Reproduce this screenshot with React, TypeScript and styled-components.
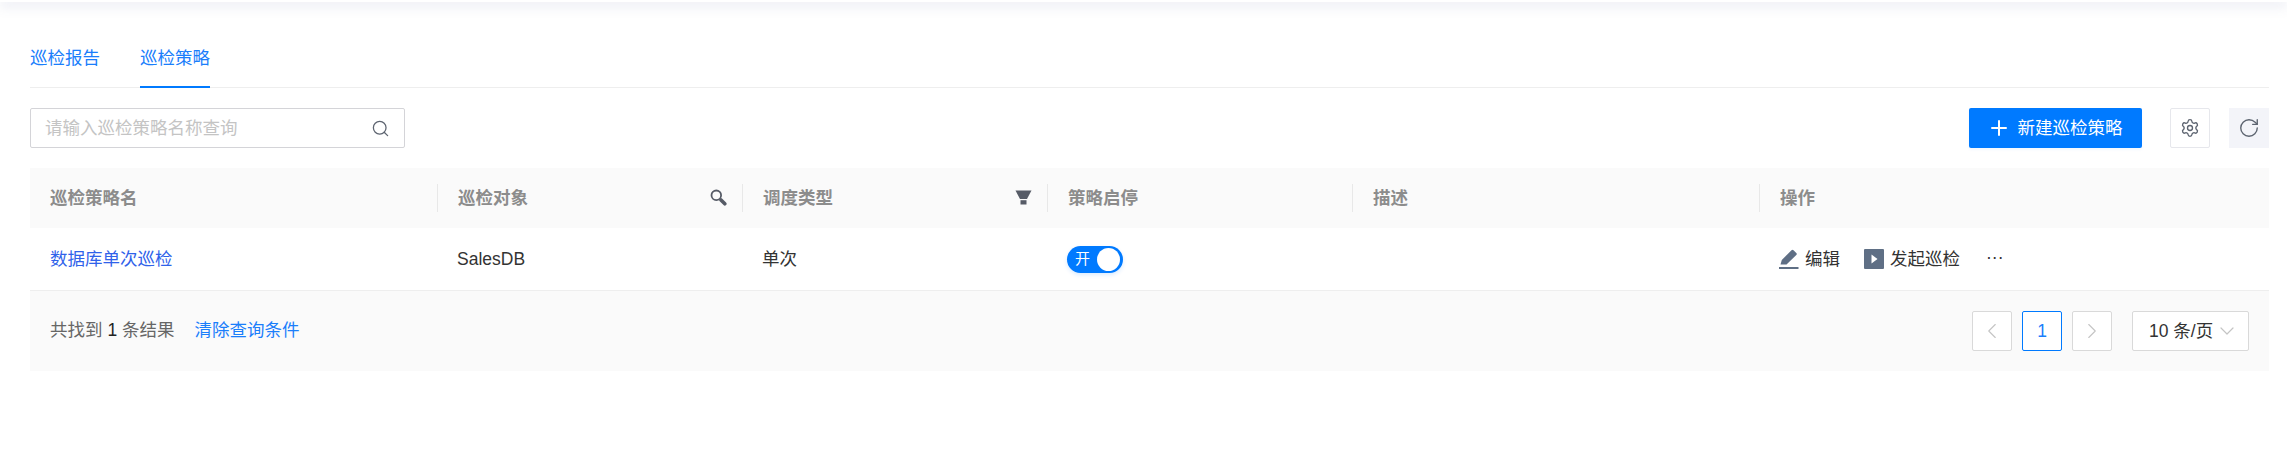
import React from 'react'
import styled, { createGlobalStyle } from 'styled-components'
import { Plus, Search, Settings, RotateCw, ChevronLeft, ChevronRight, ChevronDown } from 'lucide-react'

const GlobalStyle = createGlobalStyle`
  html, body {
    margin: 0;
    padding: 0;
    background: #fff;
    overflow: hidden;
  }
  * {
    box-sizing: border-box;
  }
  body {
    font-family: "Liberation Sans", "Noto Sans CJK SC", sans-serif;
    font-size: 17.5px;
    line-height: 24px;
    color: #333;
  }
`

const TopShadow = styled.div`
  height: 2px;
  background: #fff;
  box-shadow: 0 2px 12px rgba(100, 110, 165, 0.5);
`

const Page = styled.div`
  padding: 0 18px 0 30px;
`

const Tabs = styled.div`
  display: flex;
  gap: 40px;
  height: 86px;
  border-bottom: 1px solid #eeeeee;
`

const Tab = styled.div<{ $active?: boolean }>`
  height: 86px;
  padding-top: 44px;
  line-height: 24px;
  color: #1a7efb;
  border-bottom: ${({ $active }) => ($active ? '2px solid #007aff' : 'none')};
`

const Toolbar = styled.div`
  display: flex;
  align-items: center;
  height: 40px;
  margin-top: 20px;
`

const SearchBox = styled.div`
  width: 375px;
  height: 40px;
  display: flex;
  align-items: center;
  justify-content: space-between;
  padding: 0 14px;
  border: 1px solid #d4d4d8;
  border-radius: 2px;
  color: #c4c4c4;
  svg {
    color: #5d6470;
  }
`

const PrimaryButton = styled.div`
  margin-left: auto;
  width: 173px;
  height: 40px;
  padding-right: 2px;
  display: flex;
  align-items: center;
  justify-content: center;
  gap: 7px;
  background: #007aff;
  color: #fff;
  border-radius: 2px;
  box-shadow: 0 2px 3px rgba(0, 122, 255, 0.05);
`

const IconButton = styled.div<{ $filled?: boolean }>`
  width: 40px;
  height: 40px;
  display: flex;
  align-items: center;
  justify-content: center;
  color: #5d6470;
  border-radius: ${({ $filled }) => ($filled ? '0' : '2px')};
  background: ${({ $filled }) => ($filled ? '#f3f4f9' : '#fff')};
  border: ${({ $filled }) => ($filled ? 'none' : '1px solid #e6e7ec')};
  margin-left: ${({ $filled }) => ($filled ? '19px' : '28px')};
`

const Table = styled.div`
  margin-top: 20px;
`

const columns = '407px 305px 305px 305px 407px 1fr'

const HeaderRow = styled.div`
  display: grid;
  grid-template-columns: ${columns};
  height: 60px;
  align-items: center;
  background: #fafafa;
`

const HeaderCell = styled.div<{ $divider?: boolean }>`
  height: 28px;
  display: flex;
  align-items: center;
  justify-content: space-between;
  padding: 0 30px 1px 20px;
  font-weight: 700;
  color: #8c8c8c;
  border-left: ${({ $divider }) => ($divider ? '1px solid #e8e8e8' : 'none')};
  svg {
    flex: none;
    margin-right: -15px;
    color: #565b66;
  }
`

const BodyRow = styled.div`
  display: grid;
  grid-template-columns: ${columns};
  height: 63px;
  align-items: center;
  border-bottom: 1px solid #eeeeee;
`

const BodyCell = styled.div`
  padding-left: 20px;
  color: #333;
`

const NameLink = styled.span`
  color: #2f62ea;
`

const Toggle = styled.div`
  position: relative;
  width: 56px;
  height: 27px;
  border-radius: 14px;
  background: #007aff;
  color: #fff;
  font-size: 15px;
  line-height: 26px;
  padding-left: 8px;
  box-shadow: 0 2px 4px rgba(0, 122, 255, 0.15);
`

const Knob = styled.span`
  position: absolute;
  top: 2px;
  right: 3px;
  width: 23px;
  height: 23px;
  border-radius: 50%;
  background: #fff;
`

const Actions = styled.div`
  display: flex;
  align-items: center;
  padding-left: 20px;
`

const Action = styled.div`
  display: flex;
  align-items: center;
  gap: 6px;
  margin-right: 24px;
  color: #333;
`

const More = styled.span`
  margin-left: 2px;
  color: #333;
  position: relative;
  top: -2px;
`

const Footer = styled.div`
  height: 80px;
  display: flex;
  align-items: center;
  justify-content: space-between;
  padding: 0 20px;
  background: #fafafa;
`

const Summary = styled.div`
  display: flex;
  gap: 20px;
  padding-bottom: 2px;
  color: #666;
`

const Count = styled.b`
  font-weight: 400;
  color: #222;
`

const ClearLink = styled.span`
  color: #1a7efb;
`

const Pager = styled.div`
  display: flex;
  align-items: center;
  gap: 10px;
`

const PageButton = styled.div<{ $active?: boolean }>`
  width: 40px;
  height: 40px;
  display: flex;
  align-items: center;
  justify-content: center;
  background: #fff;
  border-radius: 2px;
  border: 1px solid ${({ $active }) => ($active ? '#007aff' : '#d9d9d9')};
  color: ${({ $active }) => ($active ? '#1a7efb' : '#c4c4c4')};
`

const SizeSelect = styled.div`
  width: 117px;
  height: 40px;
  margin-left: 10px;
  display: flex;
  align-items: center;
  justify-content: space-between;
  padding: 0 9px 0 16px;
  background: #fff;
  border: 1px solid #d9d9d9;
  border-radius: 2px;
  color: #333;
  svg {
    color: #c4c4c4;
  }
`

const KeyIcon = () => (
  <svg width="17" height="17" viewBox="0 0 17 17" fill="none">
    <circle cx="6.3" cy="6.3" r="4.8" stroke="currentColor" strokeWidth="1.8" />
    <path d="M11 11L14.8 14.8" stroke="currentColor" strokeWidth="3.6" strokeLinecap="round" />
  </svg>
)

const FunnelIcon = () => (
  <svg width="17" height="15" viewBox="0 0 17 15" fill="currentColor">
    <path d="M0.5 0.5H16.5L12 9H5Z" />
    <rect x="5.5" y="10.2" width="6" height="4.3" />
  </svg>
)

const PenIcon = () => (
  <svg width="20" height="20" viewBox="0 0 20 20" fill="#5f6f85">
    <path d="M1.5 15.5L2.8 11L12.5 1.2Q13.5 0.2 14.5 1.2L17.3 4Q18.3 5 17.3 6L7.5 15.5Z" />
    <rect y="18" width="19.5" height="2" />
  </svg>
)

const PlayIcon = () => (
  <svg width="20" height="20" viewBox="0 0 20 20">
    <rect width="20" height="20" rx="1" fill="#5f6f85" />
    <path d="M7.5 5.5L13.5 10L7.5 14.5Z" fill="#fff" />
  </svg>
)

export default function App() {
  return (
    <>
      <GlobalStyle />
      <TopShadow />
      <Page>
        <Tabs>
          <Tab>巡检报告</Tab>
          <Tab $active>巡检策略</Tab>
        </Tabs>
        <Toolbar>
          <SearchBox>
            请输入巡检策略名称查询
            <Search size={19} strokeWidth={1.6} />
          </SearchBox>
          <PrimaryButton>
            <Plus size={24} strokeWidth={2} />
            新建巡检策略
          </PrimaryButton>
          <IconButton>
            <Settings size={20} strokeWidth={1.6} />
          </IconButton>
          <IconButton $filled>
            <RotateCw size={22} strokeWidth={1.5} />
          </IconButton>
        </Toolbar>
        <Table>
          <HeaderRow>
            <HeaderCell>巡检策略名</HeaderCell>
            <HeaderCell $divider>
              巡检对象
              <KeyIcon />
            </HeaderCell>
            <HeaderCell $divider>
              调度类型
              <FunnelIcon />
            </HeaderCell>
            <HeaderCell $divider>策略启停</HeaderCell>
            <HeaderCell $divider>描述</HeaderCell>
            <HeaderCell $divider>操作</HeaderCell>
          </HeaderRow>
          <BodyRow>
            <BodyCell>
              <NameLink>数据库单次巡检</NameLink>
            </BodyCell>
            <BodyCell>SalesDB</BodyCell>
            <BodyCell>单次</BodyCell>
            <BodyCell>
              <Toggle>
                开
                <Knob />
              </Toggle>
            </BodyCell>
            <BodyCell />
            <Actions>
              <Action>
                <PenIcon />
                编辑
              </Action>
              <Action>
                <PlayIcon />
                发起巡检
              </Action>
              <More>···</More>
            </Actions>
          </BodyRow>
          <Footer>
            <Summary>
              <span>
                共找到 <Count>1</Count> 条结果
              </span>
              <ClearLink>清除查询条件</ClearLink>
            </Summary>
            <Pager>
              <PageButton>
                <ChevronLeft size={26} strokeWidth={1} />
              </PageButton>
              <PageButton $active>1</PageButton>
              <PageButton>
                <ChevronRight size={26} strokeWidth={1} />
              </PageButton>
              <SizeSelect>
                10 条/页
                <ChevronDown size={24} strokeWidth={1.2} />
              </SizeSelect>
            </Pager>
          </Footer>
        </Table>
      </Page>
    </>
  )
}
